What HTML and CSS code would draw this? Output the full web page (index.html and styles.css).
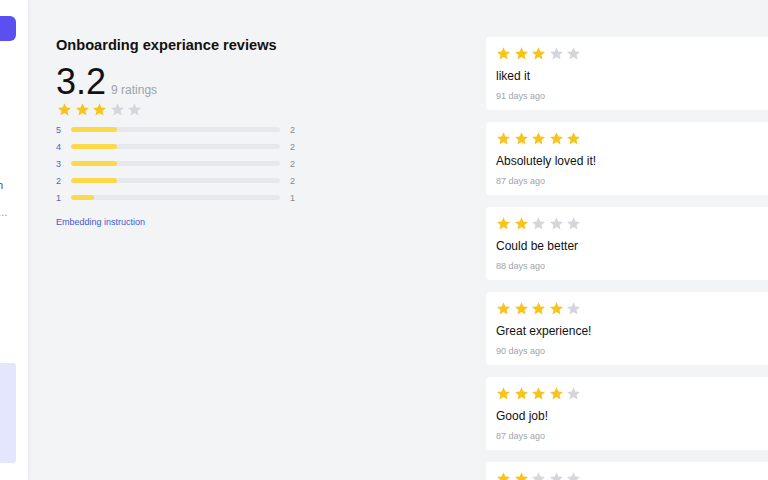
FILE: index.html
```html
<!DOCTYPE html>
<html lang="en">
<head>
    <meta charset="UTF-8">
    <meta name="viewport" content="width=device-width, initial-scale=1.0">
    <title>Reviews</title>
    <link rel="stylesheet" href="styles.css">
</head>
<body>
<svg width="0" height="0" class="defs">
    <symbol id="star" viewBox="0 0 24 24">
        <path d="M12 1.8l3 6.9 7.4.7-5.6 4.9 1.7 7.3L12 17.7l-6.5 3.9 1.7-7.3-5.6-4.9 7.4-.7z"/>
    </symbol>
</svg>

<div class="app">
    <aside class="sidebar">
        <div class="sidebar-inner">
            <div class="side-btn"></div>
            <div class="side-text">Onboarding design</div>
            <div class="side-text muted">Collect feedback on how new users felt about the onboarding flow</div>
            <div class="side-box"></div>
        </div>
    </aside>

    <main class="main">
        <section class="summary">
            <h1 class="title">Onboarding experiance reviews</h1>
            <div class="score">
                <span class="score-num">3.2</span>
                <span class="score-count">9 ratings</span>
            </div>
            <div class="stars big">
                <svg class="on"><use href="#star"/></svg>
                <svg class="on"><use href="#star"/></svg>
                <svg class="on"><use href="#star"/></svg>
                <svg class="off"><use href="#star"/></svg>
                <svg class="off"><use href="#star"/></svg>
            </div>
            <div class="bars">
                <div class="bar-row"><span class="bar-label">5</span><div class="bar"><div class="bar-fill" style="width:22.2%"></div></div><span class="bar-count">2</span></div>
                <div class="bar-row"><span class="bar-label">4</span><div class="bar"><div class="bar-fill" style="width:22.2%"></div></div><span class="bar-count">2</span></div>
                <div class="bar-row"><span class="bar-label">3</span><div class="bar"><div class="bar-fill" style="width:22.2%"></div></div><span class="bar-count">2</span></div>
                <div class="bar-row"><span class="bar-label">2</span><div class="bar"><div class="bar-fill" style="width:22.2%"></div></div><span class="bar-count">2</span></div>
                <div class="bar-row"><span class="bar-label">1</span><div class="bar"><div class="bar-fill" style="width:11.1%"></div></div><span class="bar-count">1</span></div>
            </div>
            <a class="embed-link" href="#">Embedding instruction</a>
        </section>

        <section class="reviews">
            <div class="review">
                <div class="stars">
                    <svg class="on"><use href="#star"/></svg><svg class="on"><use href="#star"/></svg><svg class="on"><use href="#star"/></svg><svg class="off"><use href="#star"/></svg><svg class="off"><use href="#star"/></svg>
                </div>
                <p class="review-text">liked it</p>
                <p class="review-date">91 days ago</p>
            </div>
            <div class="review">
                <div class="stars">
                    <svg class="on"><use href="#star"/></svg><svg class="on"><use href="#star"/></svg><svg class="on"><use href="#star"/></svg><svg class="on"><use href="#star"/></svg><svg class="on"><use href="#star"/></svg>
                </div>
                <p class="review-text">Absolutely loved it!</p>
                <p class="review-date">87 days ago</p>
            </div>
            <div class="review">
                <div class="stars">
                    <svg class="on"><use href="#star"/></svg><svg class="on"><use href="#star"/></svg><svg class="off"><use href="#star"/></svg><svg class="off"><use href="#star"/></svg><svg class="off"><use href="#star"/></svg>
                </div>
                <p class="review-text">Could be better</p>
                <p class="review-date">88 days ago</p>
            </div>
            <div class="review">
                <div class="stars">
                    <svg class="on"><use href="#star"/></svg><svg class="on"><use href="#star"/></svg><svg class="on"><use href="#star"/></svg><svg class="on"><use href="#star"/></svg><svg class="off"><use href="#star"/></svg>
                </div>
                <p class="review-text">Great experience!</p>
                <p class="review-date">90 days ago</p>
            </div>
            <div class="review">
                <div class="stars">
                    <svg class="on"><use href="#star"/></svg><svg class="on"><use href="#star"/></svg><svg class="on"><use href="#star"/></svg><svg class="on"><use href="#star"/></svg><svg class="off"><use href="#star"/></svg>
                </div>
                <p class="review-text">Good job!</p>
                <p class="review-date">87 days ago</p>
            </div>
            <div class="review">
                <div class="stars">
                    <svg class="on"><use href="#star"/></svg><svg class="on"><use href="#star"/></svg><svg class="off"><use href="#star"/></svg><svg class="off"><use href="#star"/></svg><svg class="off"><use href="#star"/></svg>
                </div>
                <p class="review-text">Not bad</p>
                <p class="review-date">85 days ago</p>
            </div>
        </section>
    </main>
</div>
</body>
</html>
```

FILE: styles.css
```css
html, body {
    margin: 0;
    padding: 0;
    height: 100%;
    overflow: hidden;
    font-family: "Liberation Sans", Arial, sans-serif;
    background: #f3f4f6;
}
.defs {
    position: absolute;
}

.app {
    display: flex;
    height: 100vh;
}

/* sidebar, scrolled so only its right edge shows */
.sidebar {
    width: 28px;
    flex-shrink: 0;
    overflow: hidden;
    background: #ffffff;
    border-right: 1px solid #eceef2;
    box-shadow: 1px 0 3px rgba(0, 0, 0, 0.03);
}
.sidebar-inner {
    width: 200px;
    margin-left: -184px;
    padding-top: 16px;
    display: flex;
    flex-direction: column;
}
.side-btn {
    height: 25px;
    border-radius: 6px;
    background: #5a4ff0;
}
.side-text {
    margin-top: 138px;
    padding-right: 13px;
    font-size: 10px;
    line-height: 14px;
    color: #333;
    text-align: right;
    white-space: nowrap;
}
.side-text.muted {
    margin-top: 13px;
    padding-right: 0;
    width: 193px;
    color: #888;
    text-align: left;
    overflow: hidden;
    text-overflow: ellipsis;
}
.side-box {
    margin-top: 143px;
    height: 100px;
    border-radius: 3px;
    background: #e3e7fd;
}

.main {
    flex: 1;
    display: flex;
    padding: 36px 0 0 27px;
    min-width: 0;
}

.summary {
    width: 430px;
    flex-shrink: 0;
}
.title {
    margin: 0;
    font-size: 14.6px;
    line-height: 18px;
    font-weight: bold;
    color: #111;
}
.score {
    margin-top: 10px;
    display: flex;
    align-items: baseline;
    gap: 5px;
}
.score-num {
    font-size: 36px;
    line-height: 36px;
    color: #111;
}
.score-count {
    font-size: 12px;
    color: #9ca3af;
}

.stars {
    display: flex;
    gap: 2.5px;
    height: 15px;
}
.stars svg {
    width: 15px;
    height: 15px;
}
.stars.big {
    margin-top: 2px;
    margin-left: 1px;
}
.stars .on {
    fill: #f8c41c;
}
.stars .off {
    fill: #d4d6db;
}

.bars {
    margin-top: 4px;
    width: 240px;
}
.bar-row {
    display: flex;
    align-items: center;
    height: 17px;
    font-size: 9px;
}
.bar-label {
    width: 15px;
    color: #5563b8;
}
.bar {
    width: 209px;
    height: 5px;
    border-radius: 3px;
    background: #e7e8eb;
    overflow: hidden;
}
.bar-fill {
    height: 100%;
    border-radius: 3px;
    background: #fcd94a;
}
.bar-count {
    margin-left: 10px;
    color: #888;
}
.embed-link {
    display: block;
    margin-top: 11px;
    font-size: 9px;
    color: #3f5bc9;
    text-decoration: none;
}

.reviews {
    width: 400px;
    flex-shrink: 0;
    margin-top: 1px;
    display: flex;
    flex-direction: column;
    gap: 12px;
}
.review {
    background: #ffffff;
    border-radius: 4px;
    padding: 9px 10px 8px;
}
.review-text {
    margin: 7px 0 0;
    font-size: 12px;
    line-height: 16px;
    color: #111;
}
.review-date {
    margin: 6px 0 0;
    font-size: 9px;
    line-height: 12px;
    color: #a0a4ab;
}
```
